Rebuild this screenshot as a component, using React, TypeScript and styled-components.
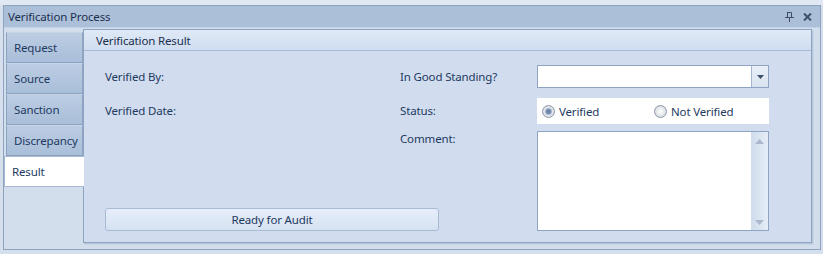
import React, { useState } from 'react';
import styled, { createGlobalStyle } from 'styled-components';

const GlobalStyle = createGlobalStyle`
    body {
        margin: 0;
        background: #d6e0ec;
        font-family: "Noto Sans", "Open Sans", sans-serif;
        font-size: 11.5px;
        letter-spacing: -0.15px;
        color: #1e3a5f;
    }
`;

// Outer dock window

const Page = styled.div`
    padding: 5px 2px 0 3px;
    height: 254px;
    box-sizing: border-box;
    background: linear-gradient(#dfe8f3 0, #dfe8f3 5px, #d6e0ec 5px);
`;

const Window = styled.div`
    height: 245px;
    box-sizing: border-box;
    border: 1px solid #8fa3c1;
    background: #d3deec;
    display: flex;
    flex-direction: column;
`;

const TitleBar = styled.div`
    height: 21px;
    display: flex;
    align-items: center;
    justify-content: space-between;
    padding: 0 8px 0 4px;
    background: #abbfd9;
    border-bottom: 1px solid #c3d2e5;
    color: #1b2f4d;
`;

const TitleIcons = styled.div`
    display: flex;
    align-items: center;
    gap: 9px;
`;

const Body = styled.div`
    flex: 1;
    display: flex;
    padding: 1px 8px 6px 0;
`;

// Side tabs

const TabColumn = styled.div`
    width: 79px;
    padding-top: 3px;
    display: flex;
    flex-direction: column;
`;

const Tab = styled.div<{ active: boolean }>`
    height: 31px;
    box-sizing: border-box;
    display: flex;
    align-items: center;
    margin: ${({ active }) => (active ? '0 -1px 0 0' : '0 0 0 2px')};
    padding-left: 7px;
    border: 1px solid ${({ active }) => (active ? '#a9bbd3' : '#8ea3c2')};
    border-top-color: ${({ active }) => (active ? '#a9bbd3' : '#c6d4e7')};
    border-right: ${({ active }) => (active ? 'none' : '1px solid #8ea3c2')};
    background: ${({ active }) =>
        active ? '#ffffff' : 'linear-gradient(#bccde3, #a9bed9)'};
    color: #1e3a5f;
    white-space: nowrap;
    overflow: hidden;
    position: relative;
    z-index: ${({ active }) => (active ? 2 : 0)};
    cursor: default;
`;

// Content panel

const Panel = styled.div`
    flex: 1;
    display: flex;
    flex-direction: column;
    border: 1px solid #8ea4c3;
    box-shadow: 1px 1px 0 #b5c5da, 2px 2px 0 #c9d6e6;
    background: #d1ddee;
`;

const PanelHeader = styled.div`
    height: 20px;
    display: flex;
    align-items: center;
    padding-left: 12px;
    background: linear-gradient(#dfe9f7, #d0ddf0);
    border-bottom: 1px solid #a8bbd6;
    color: #1b2f4d;
`;

const Form = styled.div`
    display: grid;
    grid-template-columns: 295px 137px 232px;
    grid-template-rows: 33px 33px 78px 22px;
    padding: 14px 0 0 21px;
`;

const Label = styled.div<{ h: number; col: number; row: number }>`
    grid-column: ${({ col }) => col};
    grid-row: ${({ row }) => row};
    height: ${({ h }) => h}px;
    line-height: ${({ h }) => h}px;
    white-space: nowrap;
`;

const Combo = styled.div`
    grid-column: 3;
    grid-row: 1;
    height: 23px;
    box-sizing: border-box;
    border: 1px solid #8fa4c2;
    background: #ffffff;
    display: flex;
    justify-content: flex-end;
`;

const ComboButton = styled.div`
    width: 16px;
    border-left: 1px solid #a4b6cf;
    background: linear-gradient(#e9f0f9, #d9e3f0);
    display: flex;
    align-items: center;
    justify-content: center;
`;

const RadioPanel = styled.div`
    grid-column: 3;
    grid-row: 2;
    height: 26px;
    background: #ffffff;
    display: flex;
    align-items: center;
    padding-left: 5px;
`;

const RadioItem = styled.label<{ w: number }>`
    width: ${({ w }) => w}px;
    display: flex;
    align-items: center;
    gap: 4px;
    cursor: default;
`;

const RadioCircle = styled.span<{ checked: boolean }>`
    width: 11px;
    height: 11px;
    border-radius: 50%;
    border: 1px solid #8e99a8;
    background: radial-gradient(circle, #ffffff 0, #dfe3e8 60%, #c8ced6 100%);
    display: flex;
    align-items: center;
    justify-content: center;

    &::after {
        content: '';
        width: 5px;
        height: 5px;
        border-radius: 50%;
        background: ${({ checked }) => (checked ? '#6e87a9' : 'transparent')};
        box-shadow: ${({ checked }) => (checked ? '0 0 0 1px #a9bad0' : 'none')};
    }
`;

const Memo = styled.div`
    grid-column: 3;
    grid-row: 3 / 5;
    border: 1px solid #8fa4c2;
    background: #ffffff;
    display: flex;
    justify-content: flex-end;
`;

const ScrollBar = styled.div`
    width: 17px;
    background: linear-gradient(90deg, #d0dcec, #e5edf7);
    display: flex;
    flex-direction: column;
    justify-content: space-between;
    align-items: center;
    padding: 7px 0 5px;
`;

const AuditButton = styled.button`
    grid-column: 1 / 3;
    grid-row: 4;
    width: 334px;
    height: 23px;
    margin-top: -1px;
    border: 1px solid #a9bbd3;
    border-radius: 3px;
    background: linear-gradient(#e6eefa, #d6e2f1);
    font: inherit;
    letter-spacing: inherit;
    color: #1e3a5f;
    padding: 0;
`;

const PinIcon = () => (
    <svg width="9" height="10" viewBox="0 0 9 10">
        <path d="M2 0.5h4.5v5" stroke="#3d4f6b" fill="none" />
        <path d="M2.5 0v6" stroke="#3d4f6b" />
        <path d="M0 5.5h9" stroke="#3d4f6b" />
        <path d="M4.5 6v4" stroke="#3d4f6b" />
    </svg>
);

const CloseIcon = () => (
    <svg width="9" height="8" viewBox="0 0 9 8">
        <path d="M1 0.5l7 7M8 0.5l-7 7" stroke="#3d4f6b" strokeWidth="2" />
    </svg>
);

const Arrow = ({ up, color, w = 9 }: { up?: boolean; color: string; w?: number }) => (
    <svg width={w} height={Math.ceil(w / 2)} viewBox={`0 0 ${w} ${Math.ceil(w / 2)}`}>
        <path
            d={up ? `M0 ${Math.ceil(w / 2)}L${w / 2} 0L${w} ${Math.ceil(w / 2)}Z` : `M0 0L${w} 0L${w / 2} ${Math.ceil(w / 2)}Z`}
            fill={color}
        />
    </svg>
);

const tabs = ['Request', 'Source', 'Sanction', 'Discrepancy', 'Result'];

const App: React.FC = () => {
    const [activeTab, setActiveTab] = useState('Result');
    const [status, setStatus] = useState('verified');

    return (
        <>
            <GlobalStyle />
            <Page>
                <Window>
                    <TitleBar>
                        <span>Verification Process</span>
                        <TitleIcons>
                            <PinIcon />
                            <CloseIcon />
                        </TitleIcons>
                    </TitleBar>
                    <Body>
                        <TabColumn>
                            {tabs.map((t) => (
                                <Tab key={t} active={t === activeTab} onClick={() => setActiveTab(t)}>
                                    {t}
                                </Tab>
                            ))}
                        </TabColumn>
                        <Panel>
                            <PanelHeader>Verification Result</PanelHeader>
                            <Form>
                                <Label col={1} row={1} h={23}>Verified By:</Label>
                                <Label col={1} row={2} h={26}>Verified Date:</Label>
                                <Label col={2} row={1} h={23}>In Good Standing?</Label>
                                <Label col={2} row={2} h={26}>Status:</Label>
                                <Label col={2} row={3} h={15}>Comment:</Label>
                                <Combo>
                                    <ComboButton>
                                        <Arrow color="#3d4f6b" w={7} />
                                    </ComboButton>
                                </Combo>
                                <RadioPanel>
                                    <RadioItem w={112} onClick={() => setStatus('verified')}>
                                        <RadioCircle checked={status === 'verified'} />
                                        Verified
                                    </RadioItem>
                                    <RadioItem w={100} onClick={() => setStatus('not')}>
                                        <RadioCircle checked={status === 'not'} />
                                        Not Verified
                                    </RadioItem>
                                </RadioPanel>
                                <Memo>
                                    <ScrollBar>
                                        <Arrow up color="#a9b8cc" />
                                        <Arrow color="#a9b8cc" />
                                    </ScrollBar>
                                </Memo>
                                <AuditButton>Ready for Audit</AuditButton>
                            </Form>
                        </Panel>
                    </Body>
                </Window>
            </Page>
        </>
    );
};

export default App;
